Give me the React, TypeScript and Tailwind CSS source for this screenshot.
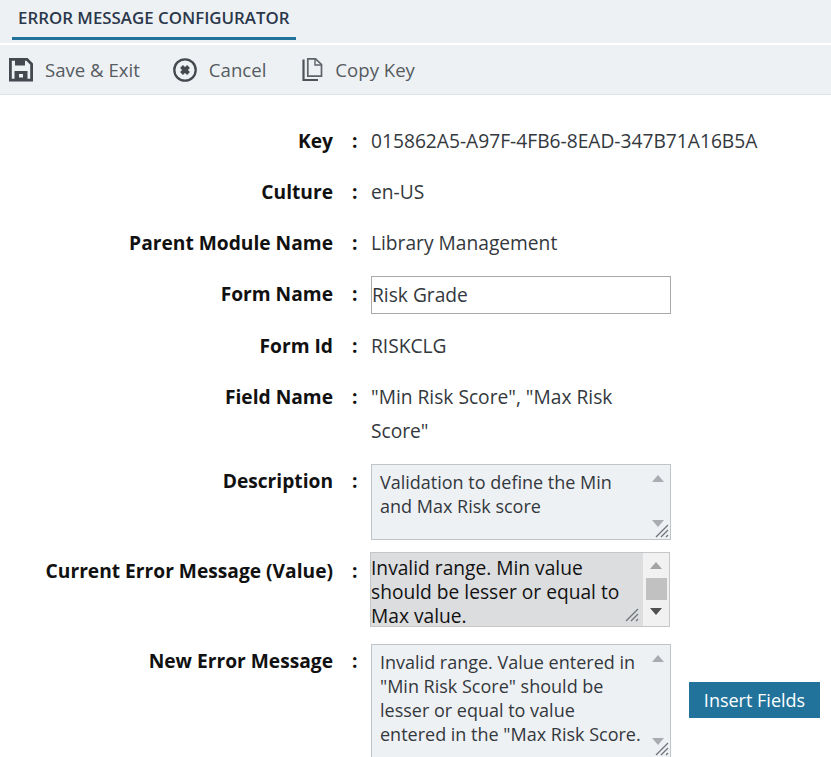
import React from 'react';

const FONT = { fontFamily: '"Open Sans", sans-serif' };

const SaveIcon = () => (
  <svg width="24" height="24" viewBox="0 0 24 24" className="shrink-0">
    <path d="M1.4 1.4H18L22.6 6V22.1H1.4Z" fill="none" stroke="#43494f" strokeWidth="2.8" />
    <path d="M6 1H16V7.5H6Z" fill="#43494f" />
    <path d="M5.5 22.5V13H18.5V22.5Z" fill="#43494f" />
    <rect x="10" y="16" width="4" height="3.5" fill="#eef1f4" />
  </svg>
);

const CancelIcon = () => (
  <svg width="24" height="24" viewBox="0 0 24 24" className="shrink-0">
    <circle cx="12" cy="12" r="10.7" fill="none" stroke="#43494f" strokeWidth="2.3" />
    <path d="M8.5 8.5L15.5 15.5M15.5 8.5L8.5 15.5" stroke="#43494f" strokeWidth="4" />
  </svg>
);

const CopyIcon = () => (
  <svg width="21" height="24" viewBox="0 0 21 24" className="shrink-0">
    <path d="M1.5 1.5V22H16" fill="none" stroke="#4d5359" strokeWidth="2.2" />
    <path d="M5.8 0.8H13.5L19.5 6.5V18.2H5.8Z" fill="none" stroke="#5d6369" strokeWidth="1.7" />
    <path d="M13 1V7H19.5" fill="none" stroke="#5d6369" strokeWidth="1.4" />
  </svg>
);

const Arrow = ({ down, color }: { down?: boolean; color: string }) => (
  <svg width="12" height="7" viewBox="0 0 12 7">
    <path d={down ? 'M0 0H12L6 7Z' : 'M6 0L12 7H0Z'} fill={color} />
  </svg>
);

const Grip = ({ className }: { className: string }) => (
  <svg width="14" height="14" viewBox="0 0 14 14" className={className}>
    <path d="M13 1L1 13M13 6L6 13M13 11L11 13" stroke="#6f7479" strokeWidth="1.3" fill="none" />
  </svg>
);

interface RowProps {
  label: string;
  className?: string;
  children: React.ReactNode;
}

const Row: React.FC<RowProps> = ({ label, className, children }) => (
  <div className={`flex items-start ${className || ''}`}>
    <div className="w-[333px] shrink-0 text-right font-bold text-[#111] leading-[34px]">{label}</div>
    <div className="w-[38px] shrink-0 pl-[19px] font-bold text-[#111] leading-[34px]">:</div>
    {children}
  </div>
);

const NoteBox = ({ text, className }: { text: string; className: string }) => (
  <div className={`relative flex w-[300px] border border-[#bfc4c9] bg-[#eef1f4] text-[#33383d] ${className}`}>
    <div className="w-[270px] pl-2 pt-[5px] text-[18px] leading-[24px]">{text}</div>
    <div className="flex flex-1 flex-col items-center justify-between pt-2.5 pb-3 pl-[3px]">
      <Arrow color="#a9adb1" />
      <Arrow down color="#a9adb1" />
    </div>
    <Grip className="absolute right-px bottom-px" />
  </div>
);

export default function App() {
  return (
    <div className="h-[757px] w-[831px] overflow-hidden bg-white text-[19.2px]" style={FONT}>
      <div className="h-[43px] bg-[#eef1f4] pl-3">
        <div className="inline-block h-10 border-b-[3px] border-[#22739b] px-1.5 pt-[6px] text-[16.87px] leading-6 font-semibold text-[#2b384b]">
          ERROR MESSAGE CONFIGURATOR
        </div>
      </div>
      <div className="mt-[2px] flex h-[50px] items-center border-b border-[#dfe3e7] bg-[#eef1f4] pl-[9px] text-[18.6px] text-[#555b61]">
        <SaveIcon />
        <span className="ml-3">Save &amp; Exit</span>
        <span className="ml-[33px]"><CancelIcon /></span>
        <span className="ml-3">Cancel</span>
        <span className="ml-9"><CopyIcon /></span>
        <span className="ml-3">Copy Key</span>
      </div>

      <div className="pt-[29px] text-[#33383d]">
        <Row label="Key">
          <div className="leading-[34px]">015862A5-A97F-4FB6-8EAD-347B71A16B5A</div>
        </Row>
        <Row label="Culture" className="mt-[17px]">
          <div className="leading-[34px]">en-US</div>
        </Row>
        <Row label="Parent Module Name" className="mt-[17px]">
          <div className="leading-[34px]">Library Management</div>
        </Row>
        <Row label="Form Name" className="mt-[17px]">
          <div className="-mt-px flex h-[38px] w-[300px] items-center border border-[#a9a9a9]">Risk Grade</div>
        </Row>
        <Row label="Form Id" className="mt-[15px]">
          <div className="leading-[34px]">RISKCLG</div>
        </Row>
        <Row label="Field Name" className="mt-[17px]">
          <div className="w-[300px] leading-[34px]">"Min Risk Score", "Max Risk Score"</div>
        </Row>
        <Row label="Description" className="mt-4">
          <NoteBox text="Validation to define the Min and Max Risk score" className="h-[76px]" />
        </Row>
        <Row label="Current Error Message (Value)" className="mt-3 [&>div:nth-child(-n+2)]:pt-0.5">
          <div className="relative -ml-px flex h-[75px] w-[300px] border border-[#c4c6c8] bg-[#f1f1f1] text-[#111]">
            <div className="w-[272px] bg-[#dcdddf] pt-[3px] leading-[24px]">
              Invalid range. Min value should be lesser or equal to Max value.
            </div>
            <div className="flex flex-1 flex-col items-center pt-[9px]">
              <Arrow color="#a3a3a3" />
              <div className="mt-[9px] h-[22px] w-[21px] bg-[#c1c1c1]" />
              <div className="mt-2"><Arrow down color="#505050" /></div>
            </div>
            <Grip className="absolute right-[30px] bottom-1" />
          </div>
        </Row>
        <Row label="New Error Message" className="mt-[17px]">
          <NoteBox
            text={'Invalid range. Value entered in "Min Risk Score" should be lesser or equal to value entered in the "Max Risk Score.'}
            className="h-[114px]"
          />
          <button className="mt-[38px] ml-[18px] h-9 w-[131px] bg-[#22739b] text-[18px] text-white">Insert Fields</button>
        </Row>
      </div>
    </div>
  );
}
